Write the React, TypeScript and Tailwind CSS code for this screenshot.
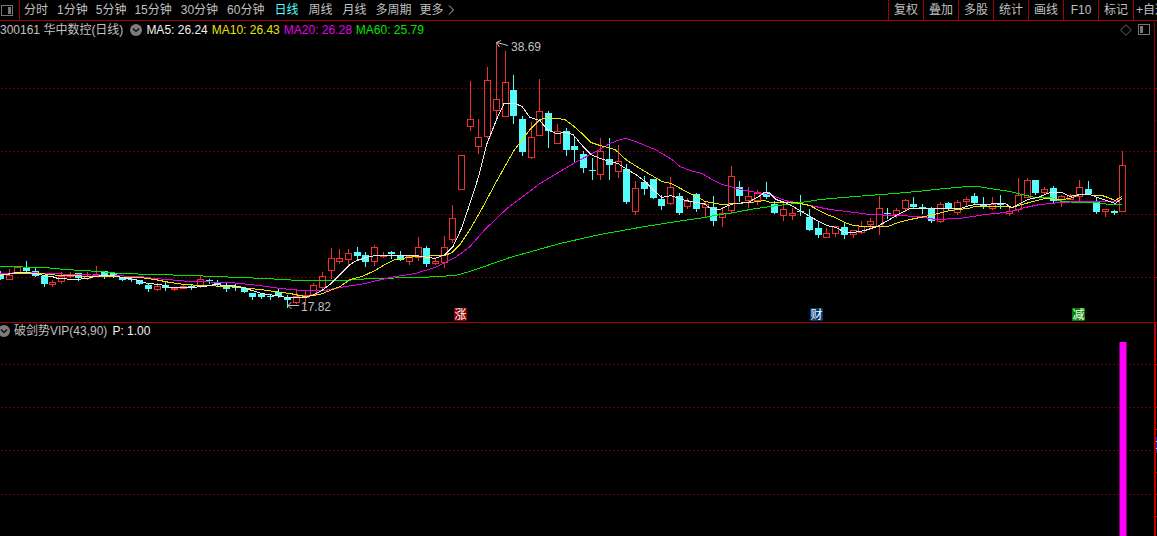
import React from 'react';

// high, body top, body bottom, low, rising (1) or falling (0)
type Candle = [number, number, number, number, 0 | 1];

const STEP = 8.7;
const CHART_TOP = 38;
const INDICATOR_TOP = 339;

const candles: Candle[] = [
  [271, 275, 279, 279, 0], [269, 275, 279, 279, 1], [267, 267, 273, 273, 1], [261, 267, 271, 271, 0],
  [267, 271, 276, 276, 0], [276, 276, 284, 286, 0], [280, 282, 284, 286, 1], [272, 276, 281, 283, 1],
  [272, 275, 276, 277, 1], [273, 273, 278, 280, 0], [272, 276, 278, 279, 1], [266, 274, 276, 276, 1],
  [271, 271, 276, 278, 0], [272, 273, 277, 277, 0], [277, 277, 280, 280, 0], [278, 279, 280, 281, 0],
  [280, 280, 284, 284, 0], [283, 285, 289, 291, 0], [283, 286, 289, 290, 1], [282, 285, 288, 290, 0],
  [287, 288, 289, 290, 1], [284, 286, 288, 288, 1], [285, 286, 288, 289, 0], [275, 279, 286, 287, 1],
  [279, 280, 281, 283, 0], [280, 282, 285, 285, 0], [282, 285, 289, 291, 0], [284, 286, 288, 290, 0],
  [287, 288, 292, 292, 0], [293, 293, 297, 299, 0], [293, 294, 297, 298, 0], [294, 296, 297, 299, 0],
  [288, 292, 296, 297, 0], [295, 297, 300, 307, 0], [290, 296, 302, 303, 1], [291, 295, 297, 304, 1],
  [283, 285, 294, 295, 1], [272, 276, 287, 289, 1], [248, 258, 270, 278, 1], [249, 258, 261, 263, 1],
  [249, 253, 259, 264, 1], [247, 252, 256, 259, 0], [252, 255, 262, 266, 0], [245, 247, 261, 265, 1],
  [252, 255, 256, 257, 1], [251, 252, 254, 258, 0], [251, 256, 260, 260, 0], [256, 256, 261, 264, 1],
  [237, 247, 257, 260, 1], [246, 248, 264, 266, 0], [258, 261, 263, 264, 1], [236, 247, 262, 267, 1],
  [205, 218, 239, 242, 1], [155, 155, 189, 189, 1], [81, 119, 126, 130, 1], [119, 137, 146, 153, 1],
  [67, 80, 136, 137, 1], [42, 99, 110, 117, 1], [51, 82, 116, 116, 1], [75, 90, 116, 123, 0],
  [116, 119, 152, 155, 0], [122, 137, 157, 158, 1], [79, 111, 135, 135, 1], [111, 113, 131, 147, 0],
  [124, 131, 143, 143, 1], [128, 131, 150, 155, 0], [136, 146, 150, 161, 0], [151, 154, 168, 172, 0],
  [158, 170, 171, 179, 0], [138, 151, 174, 179, 1], [138, 159, 165, 179, 0], [145, 161, 171, 177, 1],
  [164, 169, 202, 203, 0], [181, 188, 211, 214, 1], [176, 182, 189, 194, 0], [179, 179, 198, 198, 0],
  [195, 199, 206, 209, 0], [177, 187, 203, 204, 1], [193, 196, 213, 214, 0], [198, 201, 206, 208, 1],
  [193, 194, 209, 211, 0], [201, 204, 207, 216, 1], [196, 207, 221, 225, 0], [207, 213, 217, 226, 1],
  [166, 176, 210, 213, 1], [181, 187, 196, 201, 0], [187, 196, 200, 207, 1], [190, 193, 200, 204, 1],
  [182, 192, 197, 198, 0], [201, 204, 213, 213, 0], [203, 209, 215, 220, 1], [208, 213, 215, 219, 1],
  [195, 211, 212, 215, 0], [209, 217, 230, 230, 0], [222, 228, 235, 237, 0], [228, 233, 237, 237, 1],
  [226, 226, 233, 236, 1], [223, 227, 235, 238, 0], [230, 230, 234, 237, 1], [221, 226, 232, 233, 1],
  [218, 221, 224, 227, 1], [196, 208, 226, 234, 1], [208, 213, 214, 218, 0], [208, 210, 214, 217, 1],
  [199, 200, 208, 211, 1], [197, 204, 207, 208, 0], [204, 207, 208, 213, 0], [207, 209, 221, 222, 0],
  [202, 204, 221, 222, 1], [202, 203, 209, 210, 0], [200, 202, 212, 214, 1], [197, 199, 201, 205, 1],
  [193, 196, 203, 204, 0], [197, 205, 206, 208, 0], [197, 204, 208, 209, 1], [195, 203, 205, 208, 0],
  [207, 211, 213, 215, 1], [178, 195, 209, 211, 1], [178, 180, 197, 197, 1], [180, 180, 193, 194, 0],
  [187, 189, 192, 194, 1], [186, 188, 201, 203, 0], [195, 196, 199, 206, 1], [194, 195, 199, 199, 1],
  [180, 187, 196, 201, 1], [181, 189, 194, 194, 0], [197, 201, 212, 213, 0], [209, 209, 211, 216, 1],
  [210, 211, 213, 214, 0], [151, 165, 211, 211, 1],
];

const averages = [
  {
    color: '#00e600',
    points:
      '0,266 45,267 65,269 100,271 120,273 155,274 190,275 240,277 265,278 300,280 345,280 370,278 420,277 455,275 470,271 510,257 560,243 600,234 645,226 690,219 705,217 720,214 735,212 750,209 770,206 795,203 820,199 855,196 895,193 917,191 945,188 968,186 978,186 990,188 1010,191 1022,194 1035,197 1050,197 1062,201 1080,202 1095,202 1110,204 1122,204',
  },
  {
    color: '#e600e6',
    points:
      '0,273 25,272 75,274 140,276 155,278 190,281 230,282 260,285 280,288 303,290 325,290 340,287 365,283 390,277 415,273 435,267 445,262 455,257 465,250 470,246 485,229 507,208 540,183 575,162 598,150 610,143 620,139 626,138 636,141 645,145 655,149 662,153 672,159 680,166 690,170 702,173 712,179 722,184 745,190 770,194 785,200 810,205 830,209 855,212 870,214 895,215 920,216 935,219 960,218 985,214 1005,212 1015,210 1025,207 1040,204 1060,202 1080,201 1115,201 1122,199',
  },
  {
    color: '#e6e600',
    points:
      '0,274 20,273 40,273 60,275 100,276 140,277 155,279 170,282 185,284 200,285 232,286 260,289 275,291 290,293 305,296 320,294 330,290 340,286 350,279 362,276 375,270 385,264 395,259 415,256 445,255 452,252 460,244 470,229 482,208 497,180 514,150 530,129 540,119 548,117 565,119 573,125 583,134 591,142 600,145 615,149 627,160 645,171 662,181 671,183 690,193 702,199 705,201 722,204 750,202 765,200 770,202 795,202 810,205 817,209 827,214 835,217 845,222 853,225 865,226 888,226 898,222 910,219 925,216 938,213 950,210 968,208 975,206 1005,206 1012,207 1022,204 1033,201 1045,198 1062,199 1070,198 1080,194 1102,195 1108,197 1115,200 1122,196',
  },
  {
    color: '#e8e8e8',
    points:
      '0,275 17,272 26,272 35,273 44,275 52,276 58,278 75,279 87,278 95,276 104,275 113,275 122,277 135,279 148,283 160,284 170,287 190,287 205,286 215,284 225,285 234,285 243,287 252,290 262,293 275,295 287,297 305,297 312,295 322,290 330,284 340,274 350,264 357,260 366,257 375,255 415,255 422,256 428,257 435,258 445,254 453,246 461,229 468,209 478,178 487,143 497,118 504,103 515,103 522,106 530,117 540,120 547,129 556,133 566,132 573,134 583,146 591,154 600,158 610,161 618,163 627,169 636,174 645,181 655,191 662,197 671,195 682,199 695,202 704,203 712,209 720,209 728,205 735,203 748,202 757,197 765,192 770,193 776,199 785,202 793,206 805,213 817,220 827,225 836,227 845,232 853,232 865,230 877,226 888,220 898,214 910,208 960,208 970,205 977,204 1005,203 1012,207 1020,203 1028,199 1038,197 1050,192 1062,192 1070,196 1080,194 1090,194 1100,198 1110,201 1115,203 1122,198',
  },
];

const badges = [
  { x: 454, label: '涨', fill: '#8b0000' },
  { x: 810, label: '财', fill: '#003a70' },
  { x: 1072, label: '减', fill: '#008200' },
];

const shortPeriods = ['分时', '1分钟', '5分钟', '15分钟', '30分钟', '60分钟', '日线', '周线', '月线', '多周期'];
const tools = ['复权', '叠加', '多股', '统计', '画线', 'F10', '标记'];

const periodClass = (period: string) => {
  if (period === '日线') return 'px-px text-[#54fcfc]';
  if (period.length === 2) return 'px-px';
  return period.length === 4 ? 'pr-px' : '';
};

const PanelIcon: React.FC<{ side: 'left' | 'right' }> = ({ side }) => (
  <svg width="12" height="11" viewBox="0 0 12 11" fill="none" shapeRendering="crispEdges">
    <rect x="0.5" y="0.5" width="11" height="10" rx="1" stroke="#777" />
    <rect x={side === 'left' ? 2 : 7} y="2" width="3" height="7" fill="#777" />
  </svg>
);

const Collapse: React.FC<{ label: string; className?: string }> = ({ label, className }) => (
  <button aria-label={label} className={className}>
    <svg width="12" height="12" viewBox="0 0 12 12" fill="none">
      <circle cx="6" cy="6" r="6" fill="#7c7c7c" />
      <path d="M3 4.5 6 7.5 9 4.5" stroke="#111" strokeWidth="1.5" />
    </svg>
  </button>
);

const Grid: React.FC<{ rows: number[] }> = ({ rows }) => (
  <g stroke="#6c0000" strokeDasharray="2 2" shapeRendering="crispEdges">
    {rows.map((y) => (
      <line key={y} x1="1" x2="1153" y1={y + 0.5} y2={y + 0.5} />
    ))}
  </g>
);

const CandleShape: React.FC<{ candle: Candle; index: number }> = ({ candle, index }) => {
  const [high, top, bottom, low, rising] = candle;
  const x = Math.round(index * STEP);
  if (!rising) {
    return (
      <g fill="#54fcfc">
        <rect x={x} y={high} width="1" height={low - high + 1} />
        <rect x={x - 3} y={top} width="7" height={Math.max(1, bottom - top)} />
      </g>
    );
  }
  return (
    <g stroke="#f03030" fill="none">
      <path d={`M${x + 0.5} ${high}V${top}M${x + 0.5} ${bottom}V${low + 1}`} />
      <rect x={x - 2.5} y={top + 0.5} width="6" height={bottom - top} />
    </g>
  );
};

const PriceChart: React.FC = () => (
  <svg viewBox={`0 ${CHART_TOP} 1153 284`} className="block h-auto w-full" role="img" aria-label="日线">
    <Grid rows={[88, 151, 214, 277]} />
    <g shapeRendering="crispEdges">
      {candles.map((candle, i) => (
        <CandleShape key={i} candle={candle} index={i} />
      ))}
    </g>
    {averages.map((line) => (
      <polyline
        key={line.color}
        points={line.points}
        fill="none"
        stroke={line.color}
        transform="translate(0 0.5)"
        shapeRendering="crispEdges"
      />
    ))}
    <g stroke="#c0c0c0" fill="none">
      <path d="M508 45.5 497 42.5M501 40.5 496.5 42.5 499.5 47" />
      <path d="M299 305.5H288M291.5 302 288 305.5 291.5 309" />
    </g>
    <g fill="#c0c0c0" fontSize="12">
      <text x="511" y="51">38.69</text>
      <text x="301" y="311">17.82</text>
    </g>
    {badges.map((badge) => (
      <g key={badge.label}>
        <rect x={badge.x} y="308" width="13" height="13" rx="1" fill={badge.fill} />
        <text x={badge.x + 0.5} y="319" fontSize="12" fill="#fff">
          {badge.label}
        </text>
      </g>
    ))}
  </svg>
);

const IndicatorChart: React.FC = () => (
  <svg viewBox={`0 ${INDICATOR_TOP} 1153 197`} className="block h-auto w-full" role="img" aria-label="破剑势VIP">
    <Grid rows={[364, 407, 450, 494]} />
    <rect x="1119" y="342" width="8" height="194" fill="#80007f" />
    <rect x="1120" y="342" width="6" height="194" fill="#f0f" />
  </svg>
);

const App: React.FC = () => {
  return (
    <main className="overflow-hidden bg-black font-['Liberation_Sans','Noto_Sans_CJK_SC',sans-serif] text-[12px] leading-4 whitespace-nowrap text-[#c0c0c0]">
      <nav className="flex h-[21px] items-stretch border-b border-[#a00000]">
        <button aria-label="侧栏" className="w-5 shrink-0 border-r border-[#a00000] pl-px">
          <PanelIcon side="right" />
        </button>
        <div className="flex items-center gap-2 pl-[3px]">
          {shortPeriods.map((period) => (
            <button key={period} className={periodClass(period)}>
              {period}
            </button>
          ))}
          <button className="flex items-center gap-1">
            更多
            <svg width="7" height="10" viewBox="0 0 7 10" fill="none" stroke="#c0c0c0">
              <path d="M1 0.5 5.5 5 1 9.5" />
            </svg>
          </button>
        </div>
        <div className="ml-auto flex shrink-0">
          {tools.map((tool) => (
            <button key={tool} className="w-[35px] border-l border-[#a00000]">
              {tool}
            </button>
          ))}
          <button className="w-6 overflow-hidden border-l border-[#a00000] pl-0.5 text-left">+自选</button>
        </div>
      </nav>

      <section className="flex border-b border-[#a00000]">
        <div className="min-w-0 flex-1">
          <header className="flex h-[17px] items-center">
            <h1>300161 华中数控(日线)</h1>
            <Collapse label="指标" className="mr-1 ml-[7px]" />
            <div className="flex gap-1">
              <span className="text-[#f0f0f0]">MA5: 26.24</span>
              <span className="text-[#e6e600]">MA10: 26.43</span>
              <span className="text-[#e600e6]">MA20: 26.28</span>
              <span className="text-[#00e600]">MA60: 25.79</span>
            </div>
            <div className="ml-auto flex items-center gap-1.5 pr-[3px]">
              <button aria-label="标注">
                <svg width="12" height="12" viewBox="0 0 12 12" fill="none" stroke="#666">
                  <path d="M6 0.7 11.3 6 6 11.3 0.7 6Z" />
                </svg>
              </button>
              <button aria-label="面板">
                <PanelIcon side="left" />
              </button>
            </div>
          </header>
          <PriceChart />
        </div>
        <svg width="4" height="301" viewBox="0 21 4 301" className="shrink-0" shapeRendering="crispEdges">
          <path d="M1.5 22V322" stroke="#900000" />
          <path d="M2 57.5H3M2 88.5H4M2 120.5H3M2 151.5H4M2 183.5H3M2 214.5H4M2 246.5H3M2 277.5H4" stroke="#900000" />
        </svg>
      </section>

      <section className="flex">
        <div className="min-w-0 flex-1">
          <header className="flex h-4 items-center">
            <Collapse label="指标" className="-ml-0.5" />
            <h2 className="ml-1">破剑势VIP(43,90)</h2>
            <span className="ml-[5px] text-[#f0f0f0]">P: 1.00</span>
          </header>
          <IndicatorChart />
        </div>
        <svg width="4" height="213" viewBox="0 323 4 213" className="shrink-0" shapeRendering="crispEdges">
          <path d="M2 323V536" stroke="#c00000" strokeWidth="2" />
          <path d="M3 364.5H4M3 407.5H4M3 429.5H4M3 472.5H4M3 494.5H4M3 516.5H4" stroke="#c00000" />
          <rect x="3" y="437" width="1" height="16" fill="#102a9c" />
          <path d="M3 441.5H4M3 448.5H4" stroke="#c8d0f0" />
        </svg>
      </section>
    </main>
  );
};

export default App;
